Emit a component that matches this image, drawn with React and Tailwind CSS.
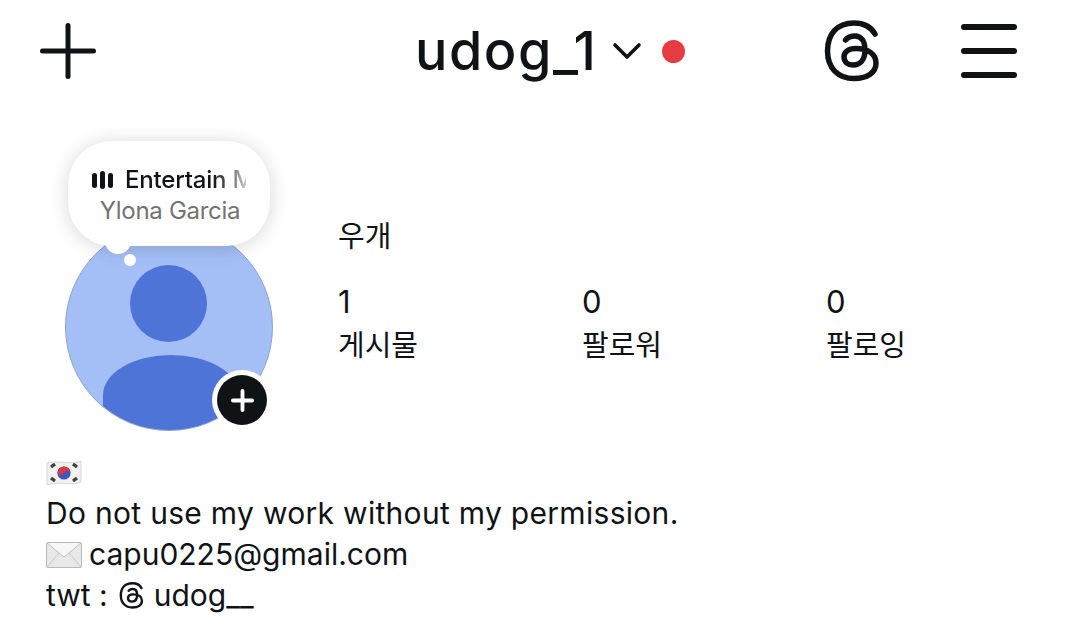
function Threads({ className }) {
  return (
    <svg viewBox="0 0 56 62" fill="none" stroke="currentColor" strokeWidth="5.5" strokeLinecap="round" className={className}>
      <path d="M51 14C47 7 39 3 30 3C13 3 3.5 14 3.5 31C3.5 48 14 58.5 30 58.5C43 58.5 52 53 52 43C52 34 44 28.5 32 28.5C24 28.5 20 32 20 37C20 42 24 45 29 45C36 45 41 40 41 30C41 21 37 16 31 16C27 16 24 17 21.5 20" />
    </svg>
  );
}

function Flag() {
  return (
    <svg viewBox="0 0 36 26" className="w-[36px] h-[26px] block">
      <path d="M1 3C12 0 24 5 35 1V22C24 26 12 21 1 25Z" fill="#f1f1f1" stroke="#cfcfcf" strokeWidth="0.8" />
      <circle cx="18" cy="13" r="6.6" fill="#3f56c0" />
      <path d="M11.4 13A6.6 6.6 0 0 1 24.6 13C23 10 19.5 10.5 18 13C16.5 15.5 13 16 11.4 13Z" fill="#d8384c" />
      <g stroke="#3f3f3f" strokeWidth="3.4" strokeDasharray="5 0.7">
        <path d="M5 7L9 4" /><path d="M27 4L31 7" /><path d="M5 18L9 21" /><path d="M27 21L31 18" />
      </g>
    </svg>
  );
}

function Envelope() {
  return (
    <svg viewBox="0 0 36 26" className="w-[36px] h-[26px] inline-block align-[-3px] mr-[7px]">
      <rect x="0.5" y="0.5" width="35" height="25" rx="1" fill="#e8e8e8" stroke="#b8b8b8" />
      <path d="M1 1L18 15L35 1" fill="#f7f7f7" stroke="#c0c0c0" />
      <path d="M1 25L13 11M35 25L23 11" stroke="#cacaca" fill="none" />
    </svg>
  );
}

export default function App() {
  return (
    <div className="w-[1080px] h-[636px] bg-white overflow-hidden text-[#101316] font-['Inter','Noto_Sans_CJK_KR',sans-serif]">
      <header className="h-[102px] pl-10 pr-[63px] flex items-center">
        <svg viewBox="0 0 56 56" fill="none" stroke="currentColor" strokeWidth="5" strokeLinecap="round" className="w-14 h-14">
          <path d="M28 2.5V53.5M2.5 28H53.5" />
        </svg>
        <div className="flex items-center ml-[319px]">
          <span className="w-[182px] text-[54px] leading-none font-medium tracking-[1.5px] whitespace-nowrap">udog_1</span>
          <svg viewBox="0 0 30 18" fill="none" stroke="currentColor" strokeWidth="3.6" strokeLinecap="round" strokeLinejoin="round" className="w-[30px] h-[18px] ml-[15px]">
            <path d="M3 3L15 15L27 3" />
          </svg>
          <span className="w-[23px] h-[23px] rounded-full bg-[#e63b41] ml-[20px]" />
        </div>
        <div className="flex items-center gap-[81px] ml-auto">
          <Threads className="w-14 h-[62px]" />
          <div className="w-14 flex flex-col gap-[18px]">
            <span className="h-[6px] rounded-full bg-[#101316]" />
            <span className="h-[6px] rounded-full bg-[#101316]" />
            <span className="h-[6px] rounded-full bg-[#101316]" />
          </div>
        </div>
      </header>

      <section className="flex pl-[65px] pt-[121px]">
        <div className="relative w-52 h-52 rounded-full shrink-0">
          <div className="w-52 h-52 rounded-full bg-[#a4bff6] overflow-hidden relative border border-[#8ea3cc]">
            <div className="absolute left-[64px] top-[41px] w-[77px] h-[77px] rounded-full bg-[#4e74d8]" />
            <div className="absolute left-[37px] top-[131px] w-[136px] h-[90px] rounded-t-[68px_40px] bg-[#4e74d8]" />
          </div>
          <div className="absolute left-[147px] top-[147px] w-[60px] h-[60px] rounded-full bg-white flex items-center justify-center">
            <div className="w-[50px] h-[50px] rounded-full bg-[#101316] flex items-center justify-center">
              <svg viewBox="0 0 24 24" fill="none" stroke="white" strokeWidth="4" strokeLinecap="round" className="w-[23px] h-[23px]">
                <path d="M12 2V22M2 12H22" />
              </svg>
            </div>
          </div>
          <div className="absolute left-[3px] top-[-82px] w-[202px] h-[105px] rounded-[44px] bg-white shadow-[0_2px_20px_rgba(0,0,0,0.16)] flex flex-col items-center pt-[24px]">
            <div className="flex items-center w-[154px] overflow-hidden whitespace-nowrap">
              <span className="flex gap-[3px] items-center mr-[12px] shrink-0">
                <span className="w-[5px] h-[15px] rounded-full bg-[#101316]" />
                <span className="w-[5px] h-[18px] rounded-full bg-[#101316]" />
                <span className="w-[5px] h-[15px] rounded-full bg-[#101316]" />
              </span>
              <span className="text-[24px] leading-[30px] font-[550] bg-gradient-to-r from-[#101316] from-[68%] to-[#ffffff] to-[100%] bg-clip-text text-transparent tracking-[-0.2px]">Entertain M</span>
            </div>
            <div className="text-[24px] leading-[30px] text-[#737373] mt-[1px] ml-[2px] tracking-[-0.3px]">Ylona Garcia</div>
          </div>
          <span className="absolute left-[40px] top-[5px] w-[26px] h-[26px] rounded-full bg-white" />
          <span className="absolute left-[59px] top-[31px] w-[12px] h-[12px] rounded-full bg-white" />
        </div>

        <div className="ml-[65px] text-[#101316]">
          <div className="text-[29px] leading-[36px] mt-[-4px]">우개</div>
          <div className="flex mt-[29px]">
            {[["1", "게시물"], ["0", "팔로워"], ["0", "팔로잉"]].map(([n, l]) => (
              <div key={l} className="w-[244px]">
                <div className="text-[31px] leading-[36px]">{n}</div>
                <div className="text-[29px] leading-[40px] mt-[6px]">{l}</div>
              </div>
            ))}
          </div>
        </div>
      </section>

      <section className="pl-[46px] pt-[21px] text-[30px] leading-[41px]">
        <div className="h-[41px] flex items-center"><Flag /></div>
        <div className="tracking-[0.3px]">Do not use my work without my permission.</div>
        <div><Envelope />capu0225@gmail.com</div>
        <div className="flex items-center">twt :<Threads className="w-[25px] h-[27px] ml-[11px] mr-[10px]" />udog__</div>
      </section>
    </div>
  );
}
